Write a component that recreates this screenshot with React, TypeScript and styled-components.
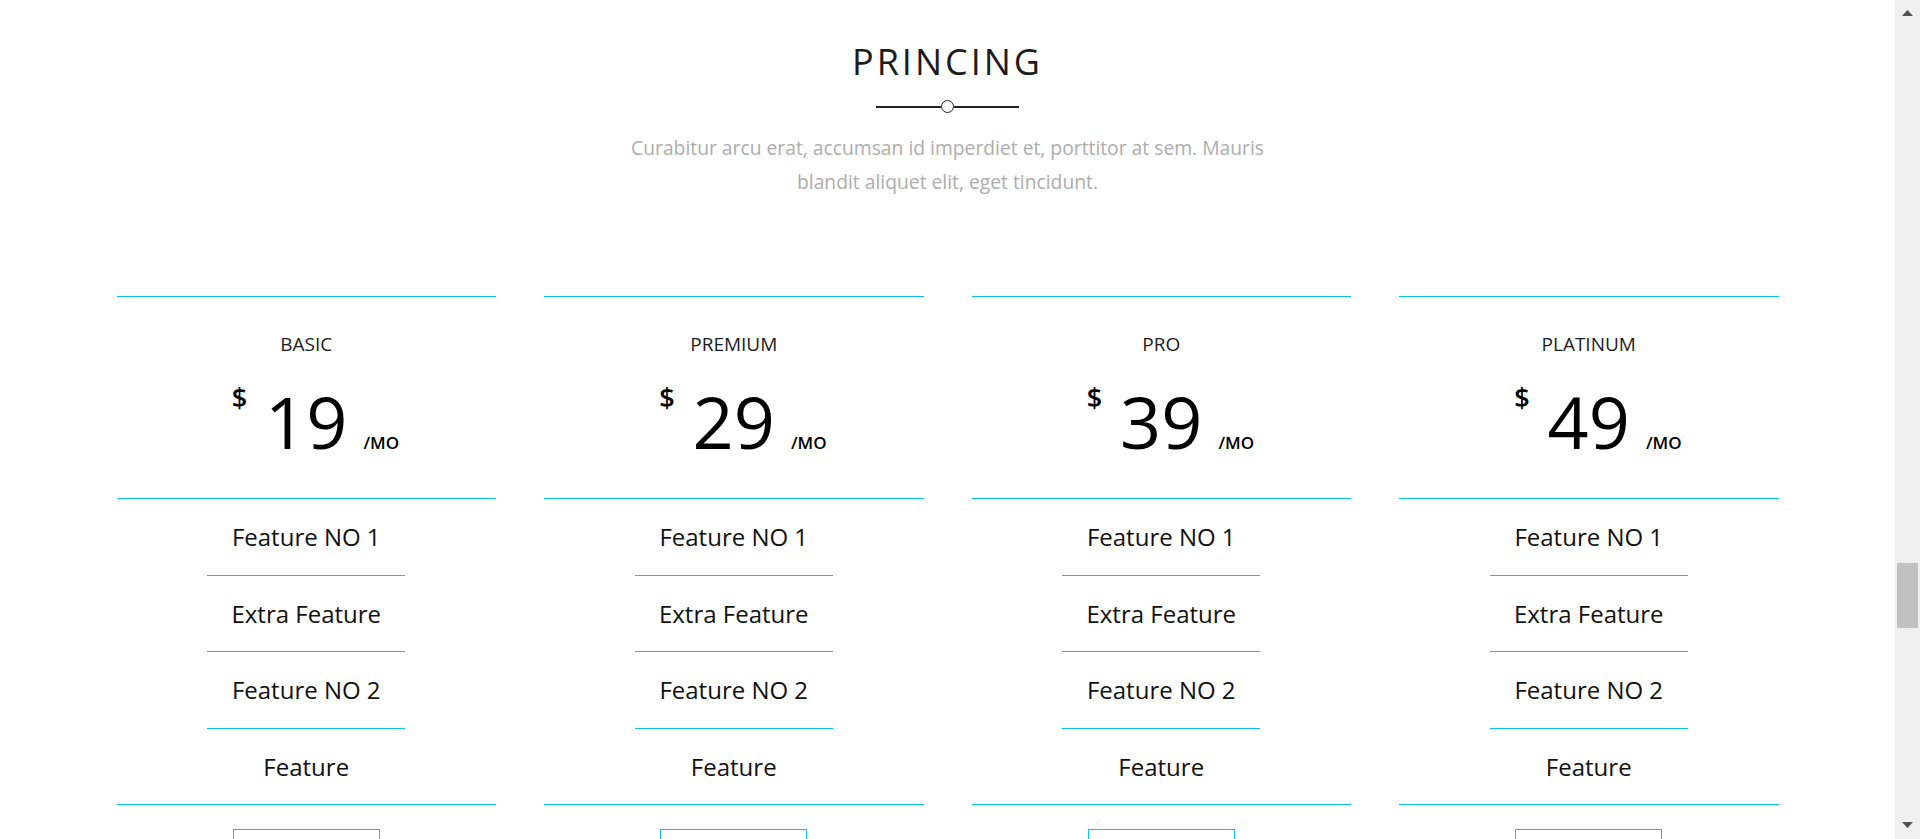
import React from "react";
import styled, { createGlobalStyle } from "styled-components";

const GlobalStyle = createGlobalStyle`
  body {
    margin: 0;
    background: #ffffff;
    font-family: "Open Sans", "Noto Sans", Arial, sans-serif;
    color: #222222;
  }
`;

const CYAN = "#08c2f2";

const Viewport = styled.div`
  display: flex;
  height: 100vh;
  overflow: hidden;
`;

const Main = styled.main`
  flex: 1;
  min-width: 0;
`;

const ScrollRail = styled.div`
  width: 25px;
  flex: none;
  background: #f0f0f0;
  display: flex;
  flex-direction: column;
`;

const RailButton = styled.div<{ $down?: boolean }>`
  height: 25px;
  display: flex;
  justify-content: center;
  align-items: flex-start;
  padding-top: ${(p) => (p.$down ? "8px" : "10px")};
  box-sizing: border-box;
`;

const RailTrack = styled.div`
  flex: 1;
  padding: 538px 2px 0;
`;

const RailThumb = styled.div`
  height: 65px;
  background: #c1c1c1;
`;

const Section = styled.section`
  padding: 35px 0 40px;
  display: flex;
  flex-direction: column;
  align-items: center;
`;

const Title = styled.h2`
  margin: 0;
  font-size: 36px;
  line-height: 54px;
  font-weight: 400;
  letter-spacing: 3px;
  color: #1c1c1c;
  text-transform: uppercase;
`;

const Divider = styled.div`
  margin-top: 11px;
  display: flex;
  align-items: center;
  height: 13px;
`;

const DividerLine = styled.span`
  width: 65px;
  height: 2px;
  background: #222222;
`;

const DividerDot = styled.span`
  width: 13px;
  height: 13px;
  box-sizing: border-box;
  border: 1.5px solid #222222;
  border-radius: 50%;
  background: #ffffff;
`;

const Lead = styled.p`
  margin: 18px 0 0;
  max-width: 660px;
  text-align: center;
  font-size: 19.3px;
  line-height: 34px;
  color: #adadad;
`;

const Grid = styled.div`
  margin-top: 97px;
  width: 1662px;
  display: grid;
  grid-template-columns: repeat(4, 1fr);
  column-gap: 48px;
`;

const Card = styled.div`
  border-top: 1px solid ${CYAN};
  display: flex;
  flex-direction: column;
  align-items: center;
`;

const CardHead = styled.div`
  align-self: stretch;
  padding: 35px 0 41px;
  border-bottom: 1px solid ${CYAN};
  display: flex;
  flex-direction: column;
  align-items: center;
  gap: 29px;
`;

const PlanName = styled.h3`
  margin: 0;
  font-size: 19px;
  line-height: 24px;
  font-weight: 400;
  color: #1c1c1c;
  text-transform: uppercase;
`;

const Price = styled.div`
  align-self: stretch;
  display: grid;
  grid-template-columns: 1fr auto 1fr;
  column-gap: 16px;
  align-items: baseline;
  color: #000000;
`;

const Currency = styled.span`
  justify-self: end;
  align-self: start;
  margin-right: 2px;
  font-size: 27px;
  line-height: 25px;
  font-weight: 600;
`;

const Amount = styled.span`
  font-size: 72px;
  line-height: 72px;
  font-weight: 400;
`;

const Period = styled.span`
  justify-self: start;
  font-size: 17px;
  font-weight: 600;
  text-transform: uppercase;
`;

const Features = styled.ul`
  align-self: stretch;
  margin: 0;
  padding: 0;
  list-style: none;
  border-bottom: 1px solid ${CYAN};
  display: flex;
  flex-direction: column;
  align-items: center;
`;

const FeatureRow = styled.li<{ $last?: boolean }>`
  width: 198px;
  height: ${(p) => (p.$last ? "75.5px" : "76.5px")};
  box-sizing: border-box;
  border-bottom: ${(p) => (p.$last ? "none" : `1px solid ${CYAN}`)};
  display: flex;
  align-items: center;
  justify-content: center;
  font-size: 24px;
  color: #111111;
`;

const BuyButton = styled.button`
  margin-top: 24px;
  width: 147px;
  height: 60px;
  border: 1px solid ${CYAN};
  background: transparent;
`;

const plans = [
  { name: "Basic", price: 19 },
  { name: "Premium", price: 29 },
  { name: "Pro", price: 39 },
  { name: "Platinum", price: 49 },
];

const features = ["Feature NO 1", "Extra Feature", "Feature NO 2", "Feature"];

function Arrow({ down }: { down?: boolean }) {
  return (
    <svg width="11" height="6" viewBox="0 0 11 6" aria-hidden="true">
      <polygon points={down ? "0,0 11,0 5.5,6" : "5.5,0 11,6 0,6"} fill="#505050" />
    </svg>
  );
}

export default function App() {
  return (
    <>
      <GlobalStyle />
      <Viewport>
        <Main>
          <Section>
            <Title>Princing</Title>
            <Divider>
              <DividerLine />
              <DividerDot />
              <DividerLine />
            </Divider>
            <Lead>
              Curabitur arcu erat, accumsan id imperdiet et, porttitor at sem. Mauris blandit aliquet
              elit, eget tincidunt.
            </Lead>
            <Grid>
              {plans.map((plan) => (
                <Card key={plan.name}>
                  <CardHead>
                    <PlanName>{plan.name}</PlanName>
                    <Price>
                      <Currency>$</Currency>
                      <Amount>{plan.price}</Amount>
                      <Period>/mo</Period>
                    </Price>
                  </CardHead>
                  <Features>
                    {features.map((f, i) => (
                      <FeatureRow key={f} $last={i === features.length - 1}>
                        {f}
                      </FeatureRow>
                    ))}
                  </Features>
                  <BuyButton aria-label={`Choose ${plan.name}`} />
                </Card>
              ))}
            </Grid>
          </Section>
        </Main>
        <ScrollRail aria-hidden="true">
          <RailButton>
            <Arrow />
          </RailButton>
          <RailTrack>
            <RailThumb />
          </RailTrack>
          <RailButton $down>
            <Arrow down />
          </RailButton>
        </ScrollRail>
      </Viewport>
    </>
  );
}
